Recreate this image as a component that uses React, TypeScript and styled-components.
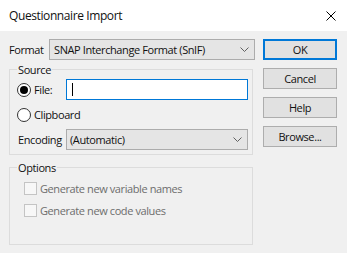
import React from 'react';
import styled, { createGlobalStyle } from 'styled-components';

const GlobalStyle = createGlobalStyle`
  html, body {
    margin: 0;
    padding: 0;
    background: #f0f0f0;
  }
  body {
    font-family: "Open Sans", "Liberation Sans", Arial, sans-serif;
    font-size: 11px;
    letter-spacing: -0.4px;
    color: #111;
  }
`;

const Dialog = styled.div`
  width: 347px;
  height: 253px;
  display: flex;
  flex-direction: column;
  background: #f0f0f0;
  overflow: hidden;
`;

const TitleBar = styled.div`
  height: 31px;
  flex: none;
  display: flex;
  align-items: center;
  justify-content: space-between;
  background: #fff;
  padding: 0 11px 0 9px;
`;

const Title = styled.span`
  font-size: 12px;
`;

const CloseIcon = styled.svg`
  width: 10px;
  height: 10px;
  display: block;
`;

const Body = styled.div`
  display: flex;
  gap: 8px;
  padding: 8px 0 0 9px;
`;

const LeftColumn = styled.div`
  width: 246px;
  display: flex;
  flex-direction: column;
`;

const FormatRow = styled.div`
  display: flex;
  align-items: center;
  height: 21px;
`;

const FieldLabel = styled.span<{ $width: number }>`
  width: ${({ $width }) => $width}px;
  flex: none;
`;

const Combo = styled.div<{ $pad: number }>`
  flex: 1;
  height: 21px;
  box-sizing: border-box;
  display: flex;
  align-items: center;
  justify-content: space-between;
  padding: 0 5px 0 ${({ $pad }) => $pad}px;
  background: #e5e5e5;
  border: 1px solid #acacac;
  white-space: nowrap;
`;

const Chevron = styled.svg`
  width: 9px;
  height: 5px;
  display: block;
`;

const Group = styled.div<{ $gap: number; $height?: number }>`
  position: relative;
  margin-top: ${({ $gap }) => $gap}px;
  margin-right: 2px;
  border: 1px solid #dcdcdc;
  ${({ $height }) => ($height ? `height: ${$height}px; box-sizing: border-box;` : '')}
`;

const Caption = styled.span`
  position: absolute;
  top: -8px;
  left: 7px;
  padding: 0 1px;
  line-height: 15px;
  background: #f0f0f0;
`;

const SourceBody = styled.div`
  display: grid;
  grid-template-columns: 49px 1fr;
  grid-template-rows: 21px 21px 21px;
  row-gap: 4px;
  align-items: center;
  padding: 9px 4px 4px 7px;
`;

const RadioOption = styled.label`
  display: flex;
  align-items: center;
  gap: 3px;
  white-space: nowrap;
`;

const RadioCircle = styled.span<{ $checked?: boolean }>`
  width: 14px;
  height: 14px;
  flex: none;
  box-sizing: border-box;
  border-radius: 50%;
  border: 1px solid #333;
  background: #fff;
  display: flex;
  align-items: center;
  justify-content: center;
  &::after {
    content: '';
    display: ${({ $checked }) => ($checked ? 'block' : 'none')};
    width: 8px;
    height: 8px;
    border-radius: 50%;
    background: #000;
  }
`;

const TextBox = styled.div`
  height: 21px;
  box-sizing: border-box;
  border: 1px solid #0078d7;
  background: #fff;
  display: flex;
  align-items: center;
  padding-left: 5px;
`;

const Caret = styled.span`
  width: 1px;
  height: 13px;
  background: #000;
`;

const EncodingLabel = styled.span`
  padding-left: 1px;
`;

const OptionsBody = styled.div`
  display: flex;
  flex-direction: column;
  gap: 9px;
  padding: 14px 0 0 14px;
`;

const CheckRow = styled.div`
  display: flex;
  align-items: center;
  gap: 3px;
  height: 13px;
  color: #6d6d6d;
  white-space: nowrap;
`;

const CheckBox = styled.span`
  width: 13px;
  height: 13px;
  box-sizing: border-box;
  border: 1px solid #c4c4c4;
  background: #f7f7f7;
  flex: none;
`;

const ButtonColumn = styled.div`
  width: 74px;
  display: flex;
  flex-direction: column;
  gap: 8px;
`;

const DialogButton = styled.button<{ $default?: boolean }>`
  height: 21px;
  box-sizing: border-box;
  margin: 0;
  padding: 0;
  font: inherit;
  letter-spacing: inherit;
  color: inherit;
  background: #e1e1e1;
  border: ${({ $default }) => ($default ? '2px solid #0078d7' : '1px solid #adadad')};
`;

export default function App() {
  return (
    <>
      <GlobalStyle />
      <Dialog>
        <TitleBar>
          <Title>Questionnaire Import</Title>
          <CloseIcon viewBox="0 0 10 10">
            <path d="M0.5 0.5 L9.5 9.5 M9.5 0.5 L0.5 9.5" stroke="#000" strokeWidth="1" fill="none" />
          </CloseIcon>
        </TitleBar>
        <Body>
          <LeftColumn>
            <FormatRow>
              <FieldLabel $width={40}>Format</FieldLabel>
              <Combo $pad={4}>
                SNAP Interchange Format (SnIF)
                <Chevron viewBox="0 0 9 5">
                  <path d="M0.5 0.5 L4.5 4.5 L8.5 0.5" stroke="#606060" strokeWidth="1" fill="none" />
                </Chevron>
              </Combo>
            </FormatRow>

            <Group $gap={9}>
              <Caption>Source</Caption>
              <SourceBody>
                <RadioOption>
                  <RadioCircle $checked />
                  File:
                </RadioOption>
                <TextBox>
                  <Caret />
                </TextBox>
                <RadioOption>
                  <RadioCircle />
                  Clipboard
                </RadioOption>
                <span />
                <EncodingLabel>Encoding</EncodingLabel>
                <Combo $pad={3}>
                  (Automatic)
                  <Chevron viewBox="0 0 9 5">
                    <path d="M0.5 0.5 L4.5 4.5 L8.5 0.5" stroke="#606060" strokeWidth="1" fill="none" />
                  </Chevron>
                </Combo>
              </SourceBody>
            </Group>

            <Group $gap={12} $height={78}>
              <Caption>Options</Caption>
              <OptionsBody>
                <CheckRow>
                  <CheckBox />
                  Generate new variable names
                </CheckRow>
                <CheckRow>
                  <CheckBox />
                  Generate new code values
                </CheckRow>
              </OptionsBody>
            </Group>
          </LeftColumn>

          <ButtonColumn>
            <DialogButton $default>OK</DialogButton>
            <DialogButton>Cancel</DialogButton>
            <DialogButton>Help</DialogButton>
            <DialogButton>Browse...</DialogButton>
          </ButtonColumn>
        </Body>
      </Dialog>
    </>
  );
}
